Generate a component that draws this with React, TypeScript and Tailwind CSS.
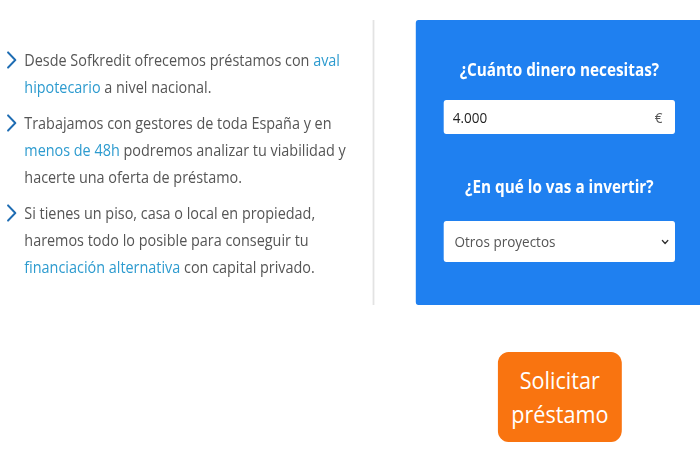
import { ChevronDown } from 'lucide-react';

const Arrow = () => (
    <svg width="12" height="18" viewBox="0 0 12 18" className="shrink-0 mt-[4px]">
        <polyline points="2,1.5 10,9 2,16.5" fill="none" stroke="#1f6db3" strokeWidth="2.2" strokeLinecap="round" strokeLinejoin="round" />
    </svg>
);

const Link = ({ children }: { children: React.ReactNode }) => (
    <span className="text-[#2d9bcf]">{children}</span>
);

const points = [
    <>Desde Sofkredit ofrecemos préstamos con <Link>aval hipotecario</Link> a nivel nacional.</>,
    <>Trabajamos con gestores de toda España y en <Link>menos de 48h</Link> podremos analizar tu viabilidad y hacerte una oferta de préstamo.</>,
    <>Si tienes un piso, casa o local en propiedad, haremos todo lo posible para conseguir tu <Link>financiación alternativa</Link> con capital privado.</>,
];

export default function App() {
    return (
        <div className="w-[700px] h-[450px] overflow-hidden bg-white">
            {/* section is laid out at 778px and narrowed to fit the 700px frame */}
            <div className="w-[778px] origin-top-left scale-x-[0.9] pt-[20px] font-['Open_Sans',sans-serif]">
                <div className="flex items-start">
                    {/* Left column with the selling points */}
                    <div className="w-[416px] h-[285px] shrink-0 border-r-2 border-[#e3e3e3] pl-[7px] pt-[27px]">
                        <ul className="space-y-[9px]">
                            {points.map((p, i) => (
                                <li key={i} className="flex gap-[8px]">
                                    <Arrow />
                                    <p className="w-[370px] text-[16px] leading-[27px] text-[#555]">{p}</p>
                                </li>
                            ))}
                        </ul>
                    </div>

                    {/* Simulator form */}
                    <div className="ml-[46px] w-[320px] shrink-0 flex flex-col items-center">
                        <div className="w-full h-[285px] bg-[#1f80f0] rounded-tl-[3px] rounded-bl-[3px] pl-[31px] pr-[32px] pt-[37px]">
                            <h2 className="text-center text-white font-bold text-[17px] leading-[26px] whitespace-nowrap">¿Cuánto dinero necesitas?</h2>
                            <div className="mt-[17px] h-[34px] bg-white rounded-[3px] flex items-center justify-between pl-[10px] pr-[14px] text-[15px] text-[#222]">
                                <span>4.000</span>
                                <span className="text-[#555]">€</span>
                            </div>
                            <h2 className="mt-[40px] text-center text-white font-bold text-[17px] leading-[26px] whitespace-nowrap">¿En qué lo vas a invertir?</h2>
                            <div className="mt-[21px] h-[41px] bg-white rounded-[3px] flex items-center justify-between pl-[12px] pr-[5px] text-[15px] text-[#555]">
                                <span>Otros proyectos</span>
                                <ChevronDown size={12} strokeWidth={3} className="text-[#333]" />
                            </div>
                        </div>
                        <button className="mt-[47px] w-[138px] h-[90px] rounded-[12px] bg-[#f97410] text-white text-[24px] leading-[34px]">
                            Solicitar<br />préstamo
                        </button>
                    </div>
                </div>
            </div>
        </div>
    );
}
